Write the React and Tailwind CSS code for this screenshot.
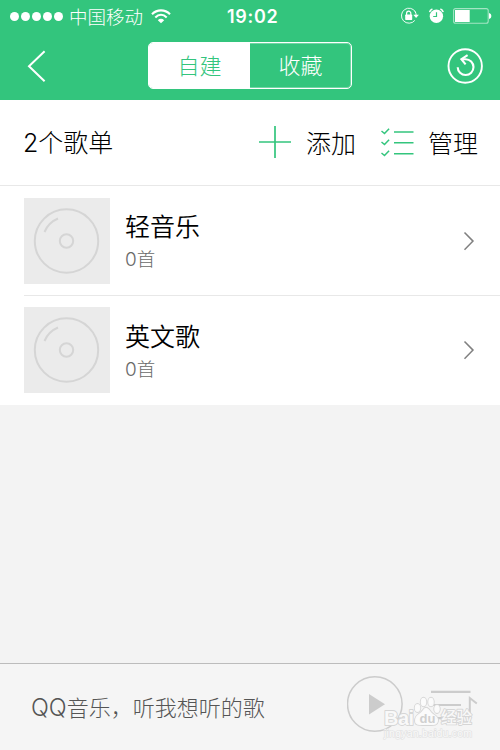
const playlists = [
  { id: 1, name: '轻音乐', count: 0 },
  { id: 2, name: '英文歌', count: 0 },
]

function StatusBar() {
  return (
    <div className="flex h-8 items-center text-white">
      <div className="flex w-[227px] items-center pl-[10px]">
        <div className="flex gap-[2px]">
          {[0, 1, 2, 3, 4].map((i) => (
            <span key={i} className="size-[9px] rounded-full bg-white" />
          ))}
        </div>
        <span className="ml-[6px] text-[18.5px] leading-8 font-light">中国移动</span>
        <svg className="ml-[8px]" width="20" height="15" viewBox="0 0 20 15" fill="none" stroke="white" strokeWidth="2.1">
          <path d="M1 5.2C6 .1 14 .1 19 5.2" />
          <path d="M4.3 8.4c3.4-3.3 8-3.3 11.4 0" />
          <path d="M6.8 11.2c1.8-1.8 4.6-1.8 6.4 0L10 14.3Z" fill="white" stroke="none" />
        </svg>
      </div>
      <span className="w-[172px] pt-px font-[Inter] text-[18px] leading-8 font-semibold tracking-[0.7px]">19:02</span>
      <svg width="101" height="32" viewBox="399 0 101 32" fill="none" stroke="white">
        <path d="M414.8 20.4A7.5 7.5 0 1 1 415.6 12.2" strokeWidth="1" opacity=".9" />
        <path d="M415 11.5q1.2 1.8 1.2 4" strokeWidth="1" />
        <path d="M413.3 14.7h5.6l-2.8 3.4z" fill="white" stroke="none" />
        <rect x="405.2" y="14.6" width="7" height="5.3" rx=".6" fill="white" stroke="none" />
        <path d="M406.6 15v-1.7a2.1 2.1 0 0 1 4.2 0V15" strokeWidth="1.2" />
        <circle cx="436.4" cy="16.2" r="6.7" fill="white" stroke="none" />
        <path d="M429.6 12.2q.4-2.4 2.8-3.2M440.4 9q2.4.8 2.8 3.2" strokeWidth="1.5" />
        <path d="M436.5 12.2v4.3h-3.3" stroke="#33c57d" strokeWidth="1.2" />
        <rect x="453.6" y="8.6" width="34.6" height="14.6" rx="2" strokeWidth="1.1" opacity=".55" />
        <path d="M455 10h14.7v12H455z" fill="white" stroke="none" />
        <path d="M489 13q2.4.5 2.4 3t-2.4 3z" fill="white" stroke="none" />
      </svg>
    </div>
  )
}

function NavBar() {
  return (
    <div className="flex h-[68px] items-start justify-between pr-[16px] pl-[27px]">
      <svg className="mt-[18px]" width="20" height="32" viewBox="0 0 20 32" fill="none" stroke="white" strokeWidth="2">
        <path d="M17.6 1.3 2 16.3l15.6 15" />
      </svg>
      <div className="mt-[10px] ml-[66px] flex h-[47px] w-[204px] overflow-hidden rounded-[5px] border border-white text-[22px] font-light ring-1 ring-white/30 ring-inset">
        <button type="button" className="flex w-[101px] items-center justify-center bg-white pb-[2px] text-[#33c57d]">
          自建
        </button>
        <button type="button" className="flex flex-1 items-center justify-center pb-[2px] text-white">
          收藏
        </button>
      </div>
      <svg className="mt-[15px] ml-[60px]" width="37" height="37" viewBox="447 47 37 37" fill="none" stroke="white" strokeWidth="2.1">
        <circle cx="465.2" cy="66" r="16.7" strokeWidth="1.9" />
        <path d="M457.7 67.2A7.9 7.9 0 1 0 465.6 59.2H462" />
        <path d="M467.6 55.2 461.4 59.2l4.2 5.2" />
      </svg>
    </div>
  )
}

function Toolbar({ total }) {
  return (
    <div className="flex h-[86px] items-center border-b border-[#e8e8e8] bg-white pb-px pl-[23px] text-[25px] leading-none font-light text-black">
      <h1 className="w-[236px]">
        <span className="font-[Inter] text-[25px] font-light">{total}</span>个歌单
      </h1>
      <svg width="32" height="32" viewBox="0 0 32 32" fill="none" stroke="#33c57d" strokeWidth="1.7">
        <path d="M16 0v32M0 16h32" />
      </svg>
      <span className="ml-[15px] w-[75px]">添加</span>
      <svg width="33" height="30" viewBox="381 128 33 30" fill="none" stroke="#33c57d">
        <path d="M394 133h19.5M394 143.8h19.5M394 154.8h19.5" strokeWidth="1.4" />
        <path d="m381.5 132 3 2.5 4.6-4.8M381.5 143l3 2.5 4.6-4.8M381.5 154l3 2.5 4.6-4.8" strokeWidth="1.5" />
      </svg>
      <span className="ml-[14px]">管理</span>
    </div>
  )
}

function Disc() {
  return (
    <svg className="shrink-0 bg-[#ebebeb]" width="86" height="86" viewBox="0 0 86 86" fill="none" stroke="#d5d5d5" strokeWidth="2">
      <circle cx="42.5" cy="43" r="31.7" />
      <circle cx="42.5" cy="43" r="6.7" />
      <path d="M20.5 34Q24.5 24.5 34 20.5" />
    </svg>
  )
}

function PlaylistRow({ name, count, last }) {
  return (
    <li className={`ml-[24px] flex items-start ${last ? 'h-[109px] pt-[11px]' : 'h-[110px] border-b border-[#e8e8e8] pt-[12px]'}`}>
      <Disc />
      <div className={`ml-[15px] flex-1 ${last ? 'mt-[15px]' : 'mt-[14px]'}`}>
        <p className="text-[25px] leading-[26px] font-[350] text-black">{name}</p>
        <p className="mt-[11px] text-[18.5px] leading-[18px] font-light text-[#6a6a6a]">
          <span className="font-[Inter] text-[19px] font-light">{count}</span>首
        </p>
      </div>
      <svg className="mt-[33px] mr-[25px]" width="12" height="20" viewBox="0 0 12 20" fill="none" stroke="#808080" strokeWidth="1.5">
        <path d="m1.5 1.5 8.5 8.6-8.5 8.6" />
      </svg>
    </li>
  )
}

function Watermark() {
  return (
    <svg className="absolute top-[30px] left-[380px]" width="100" height="50" viewBox="380 693 100 50" fontFamily="Liberation Sans, Noto Sans CJK SC, sans-serif">
      <g fill="#fbfbfb" fillOpacity=".95" stroke="#d6d6d6" strokeWidth="1.8" strokeLinejoin="round" paintOrder="stroke" fontWeight="700">
        <text x="384" y="724" fontSize="20" textLength="30">Bai</text>
        <path d="M415 720c0-7 5-6 8-11s6-1 8 2 8 4 7 9-5 4-11 4-12 1-12-4Z" />
        <ellipse cx="417.5" cy="707" rx="2.8" ry="4" />
        <ellipse cx="423.5" cy="701" rx="2.8" ry="4.3" />
        <ellipse cx="431" cy="701" rx="2.8" ry="4.3" />
        <ellipse cx="437" cy="708" rx="2.8" ry="4" />
        <text x="441" y="722" fontSize="15.5" textLength="31" fontWeight="500">经验</text>
      </g>
      <text x="419.5" y="722" fontSize="13" fontWeight="700" fill="#d0d0d0">du</text>
      <text x="384" y="736" fontSize="10.5" fontWeight="400" fill="#fafafa" stroke="#e0e0e0" strokeWidth="1.2" paintOrder="stroke" textLength="88">
        jingyan.baidu.com
      </text>
    </svg>
  )
}

function PlayerBar() {
  return (
    <footer className="relative flex h-[87px] items-center border-t border-[#bcbcbc] bg-[#f5f5f5] pl-[31px]">
      <p className="w-[316px] text-[22px] leading-none font-light text-[#555]">
        <span className="font-[Inter] text-[23.5px] font-light">QQ</span>音乐，听我想听的歌
      </p>
      <svg className="-mt-[6px]" width="132" height="60" viewBox="347 674 132 60" fill="none" stroke="#cccccc">
        <circle cx="374.8" cy="704" r="27.3" strokeWidth="1.5" />
        <path d="M369 694v20.5l16-10.2z" fill="#cccccc" stroke="none" />
        <path d="M431 691.8h39.5M431 705h30M431 718.2h30" strokeWidth="2.2" />
        <path d="M469.8 721v-23l7 5.5" strokeWidth="2" />
      </svg>
      <Watermark />
    </footer>
  )
}

export default function App() {
  return (
    <div className="flex h-[750px] w-[500px] flex-col overflow-hidden bg-[#f3f3f3] font-['Noto_Sans_CJK_SC',sans-serif]">
      <header className="bg-[#33c57d]">
        <StatusBar />
        <NavBar />
      </header>
      <Toolbar total={playlists.length} />
      <ul className="bg-white">
        {playlists.map((p, i) => (
          <PlaylistRow key={p.id} name={p.name} count={p.count} last={i === playlists.length - 1} />
        ))}
      </ul>
      <div className="flex-1" />
      <PlayerBar />
    </div>
  )
}
